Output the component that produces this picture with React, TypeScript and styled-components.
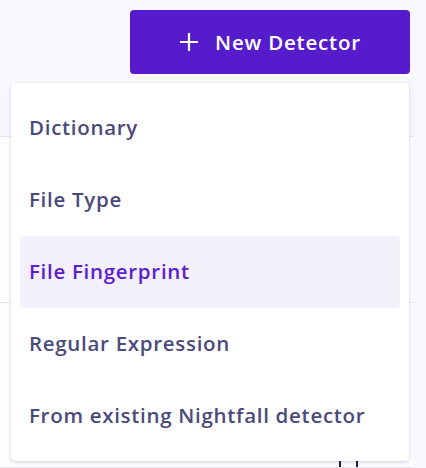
import React from 'react';
import styled, { createGlobalStyle } from 'styled-components';

const GlobalStyle = createGlobalStyle`
  html, body {
    margin: 0;
    padding: 0;
    background: #f8f7fd;
    font-family: "Open Sans", Lato, sans-serif;
  }
`;

const Page = styled.div`
  position: relative;
  width: 426px;
  height: 468px;
  overflow: hidden;
  background: #f8f7fd;
`;

const Header = styled.div`
  height: 137px;
  display: flex;
  justify-content: flex-end;
  align-items: flex-start;
  padding: 10px 3px 0 0;
  box-sizing: border-box;
  border-bottom: 1px solid #e9e8f0;
  width: 413px;
`;

const Content = styled.div`
  width: 413px;
  background: #fdfdfe;
`;

const Row = styled.div<{ $h: number }>`
  height: ${(p) => p.$h}px;
  border-bottom: 1px solid #e9e8f0;
  box-sizing: border-box;
  display: flex;
  align-items: flex-end;
  padding-left: 339px;
  gap: 15px;
`;

const Tick = styled.span`
  width: 2px;
  height: 7px;
  background: #1d1850;
`;

const Anchor = styled.div`
  position: relative;
`;

const NewButton = styled.button`
  width: 280px;
  height: 64px;
  border: none;
  border-radius: 4px;
  background: #561ccb;
  color: #fff;
  display: flex;
  align-items: center;
  justify-content: center;
  gap: 16px;
  font-family: inherit;
  font-size: 20.5px;
  font-weight: 600;
  letter-spacing: 0.8px;
  cursor: pointer;
  padding: 0 0 1px;
`;

const Menu = styled.ul`
  position: absolute;
  top: 73px;
  right: 1px;
  width: 398px;
  margin: 0;
  padding: 9px;
  box-sizing: border-box;
  list-style: none;
  background: #fff;
  border-radius: 4px;
  box-shadow: 0 1px 3px rgba(40, 30, 90, 0.14), 0 2px 6px rgba(40, 30, 90, 0.06);
  z-index: 2;
`;

const Item = styled.li<{ $active?: boolean }>`
  height: 72px;
  display: flex;
  align-items: center;
  padding: 0 0 2px 9px;
  box-sizing: border-box;
  border-radius: 4px;
  font-size: 20.5px;
  font-weight: 600;
  letter-spacing: 0.7px;
  color: ${(p) => (p.$active ? '#5a1fd1' : '#4b4a7b')};
  background: ${(p) => (p.$active ? '#f3f0fa' : 'transparent')};
`;

const Plus = () => (
  <svg width="20" height="20" viewBox="0 0 20 20" fill="none">
    <path d="M10 1v18M1 10h18" stroke="#fff" strokeWidth="2.2" />
  </svg>
);

const items = [
  'Dictionary',
  'File Type',
  'File Fingerprint',
  'Regular Expression',
  'From existing Nightfall detector',
];

export default function App() {
  return (
    <Page>
      <GlobalStyle />
      <Header>
        <Anchor>
          <NewButton>
            <Plus />
            New Detector
          </NewButton>
          <Menu>
            {items.map((label) => (
              <Item key={label} $active={label === 'File Fingerprint'}>
                {label}
              </Item>
            ))}
          </Menu>
        </Anchor>
      </Header>
      <Content>
        <Row $h={166} />
        <Row $h={165}>
          <Tick />
          <Tick />
        </Row>
      </Content>
    </Page>
  );
}
